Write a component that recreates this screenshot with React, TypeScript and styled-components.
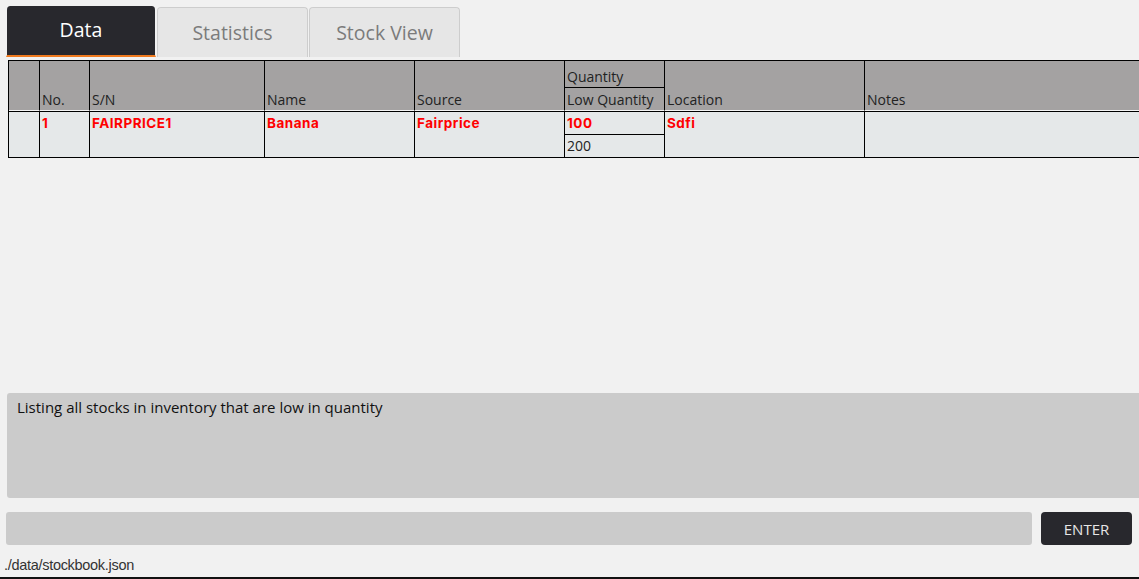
import React from "react";
import styled, { createGlobalStyle } from "styled-components";

const Global = createGlobalStyle`
  html, body { margin: 0; padding: 0; height: 100%; overflow: hidden; background: #f1f1f1; }
  #root { height: 100%; }
  * { box-sizing: border-box; }
`;

const Page = styled.div`
  height: 100vh;
  display: flex;
  flex-direction: column;
  font-family: "Open Sans", "Liberation Sans", sans-serif;
  overflow: hidden;
`;

const TabBar = styled.div`
  display: flex;
  align-items: flex-end;
  padding: 6px 0 0 6px;
  height: 57px;
  gap: 1px;
`;

const Tab = styled.div<{ $active?: boolean }>`
  width: ${(p) => (p.$active ? "150px" : "151px")};
  height: ${(p) => (p.$active ? "51px" : "50px")};
  display: flex;
  align-items: center;
  justify-content: center;
  font-size: 19.5px;
  border-radius: 4px 4px 0 0;
  background-clip: padding-box;
  ${(p) =>
    p.$active
      ? `
    background-color: #28282d;
    color: #ffffff;
    border-left: 1px solid transparent;
    border-right: 1px solid transparent;
    border-bottom: 2px solid #f07a1e;
    padding-bottom: 3px;
  `
      : `
    background-color: #e6e6e6;
    color: #7b7b7b;
    border: 1px solid #cdcdcd;
    border-bottom: none;
    padding-bottom: 1px;
  `}
`;

const TableArea = styled.div`
  flex: 1;
  padding: 3px 0 0 8px;
  overflow: hidden;
`;

const Table = styled.table`
  border-collapse: separate;
  border-spacing: 0;
  table-layout: fixed;
  width: 1160px;
  border-top: 1px solid #000;
  border-left: 1px solid #000;
  font-size: 14px;
`;

const Th = styled.th<{ $h?: number; $sub?: boolean }>`
  background: #a4a2a2;
  color: #222;
  font-weight: 400;
  text-align: left;
  vertical-align: bottom;
  padding: 0 2px 2px 2px;
  border-right: 1px solid #000;
  border-bottom: 1px solid ${(p) => (p.$sub ? "#000" : "#f4f4f4")};
  height: ${(p) => (p.$h ? `${p.$h}px` : "auto")};
  white-space: nowrap;
  overflow: hidden;
  line-height: 17px;
`;

const Td = styled.td<{ $h?: number; $red?: boolean; $top?: boolean }>`
  background: #e5e8e9;
  color: ${(p) => (p.$red ? "#ff0000" : "#222")};
  font-family: ${(p) =>
    p.$red ? `"Inter", "Open Sans", sans-serif` : `"Open Sans", sans-serif`};
  font-weight: ${(p) => (p.$red ? 700 : 400)};
  font-size: ${(p) => (p.$red ? "13.5px" : "14px")};
  letter-spacing: ${(p) => (p.$red ? "0.5px" : "0")};
  text-align: left;
  vertical-align: top;
  padding: 3px 2px 0 2px;
  border-right: 1px solid #000;
  border-bottom: 1px solid #000;
  border-top: ${(p) => (p.$top ? "1px solid #000" : "none")};
  height: ${(p) => (p.$h ? `${p.$h}px` : "auto")};
  white-space: nowrap;
  overflow: hidden;
  line-height: 17px;
`;

const SubTd = styled(Td)`
  padding-top: 2px;
`;

const ResultBox = styled.div`
  margin: 0 -10px 0 7px;
  height: 105px;
  background: #cbcbcb;
  border-radius: 3px;
  padding: 4px 10px;
  font-size: 15px;
  color: #111;
  line-height: 20px;
`;

const CommandRow = styled.div`
  display: flex;
  gap: 9px;
  margin: 14px 7px 0 6px;
  height: 33px;
`;

const CommandInput = styled.input`
  flex: 1;
  border: none;
  outline: none;
  background: #cbcbcb;
  border-radius: 3px;
  font-family: "Open Sans", sans-serif;
  font-size: 14px;
  padding: 0 10px;
`;

const EnterButton = styled.button`
  width: 91px;
  border: none;
  border-radius: 4px;
  background: #28282d;
  color: #e6e6e6;
  font-family: "Open Sans", sans-serif;
  font-size: 15px;
  padding: 0;
`;

const StatusBar = styled.div`
  height: 34px;
  display: flex;
  align-items: flex-end;
  padding: 0 0 4px 4px;
  font-family: "Liberation Sans", Arial, sans-serif;
  font-size: 14.5px;
  letter-spacing: -0.3px;
  color: #333;
  border-bottom: 2px solid #111;
`;

export default function App() {
  return (
    <Page>
      <Global />
      <TabBar>
        <Tab $active>Data</Tab>
        <Tab>Statistics</Tab>
        <Tab>Stock View</Tab>
      </TabBar>
      <TableArea>
        <Table>
          <colgroup>
            <col style={{ width: 31 }} />
            <col style={{ width: 50 }} />
            <col style={{ width: 175 }} />
            <col style={{ width: 150 }} />
            <col style={{ width: 150 }} />
            <col style={{ width: 100 }} />
            <col style={{ width: 200 }} />
            <col style={{ width: 304 }} />
          </colgroup>
          <thead>
            <tr>
              <Th rowSpan={2}></Th>
              <Th rowSpan={2}>No.</Th>
              <Th rowSpan={2}>S/N</Th>
              <Th rowSpan={2}>Name</Th>
              <Th rowSpan={2}>Source</Th>
              <Th $sub $h={27}>Quantity</Th>
              <Th rowSpan={2}>Location</Th>
              <Th rowSpan={2}>Notes</Th>
            </tr>
            <tr>
              <Th $h={23}>Low Quantity</Th>
            </tr>
          </thead>
          <tbody>
            <tr>
              <Td rowSpan={2} $top></Td>
              <Td rowSpan={2} $top $red>1</Td>
              <Td rowSpan={2} $top $red>FAIRPRICE1</Td>
              <Td rowSpan={2} $top $red>Banana</Td>
              <Td rowSpan={2} $top $red>Fairprice</Td>
              <Td $top $red $h={24}>100</Td>
              <Td rowSpan={2} $top $red>Sdfi</Td>
              <Td rowSpan={2} $top></Td>
            </tr>
            <tr>
              <SubTd $h={23}>200</SubTd>
            </tr>
          </tbody>
        </Table>
      </TableArea>
      <ResultBox>Listing all stocks in inventory that are low in quantity</ResultBox>
      <CommandRow>
        <CommandInput />
        <EnterButton>ENTER</EnterButton>
      </CommandRow>
      <StatusBar>./data/stockbook.json</StatusBar>
    </Page>
  );
}
